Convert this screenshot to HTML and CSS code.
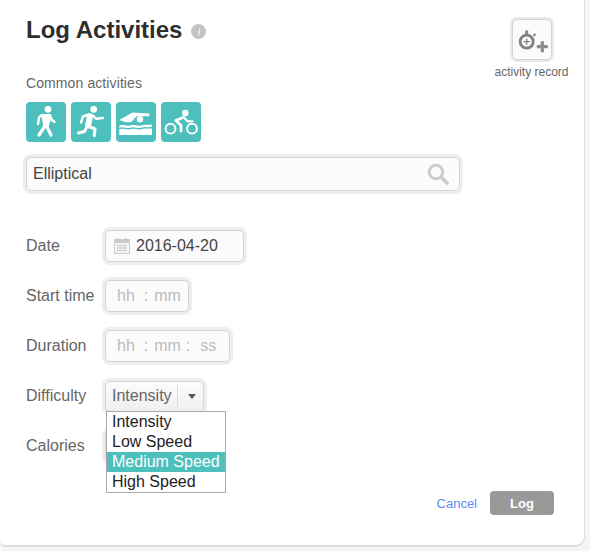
FILE: index.html
```html
<!DOCTYPE html>
<html lang="en">
<head>
    <meta charset="UTF-8">
    <meta name="viewport" content="width=device-width, initial-scale=1.0">
    <title>Log Activities</title>
    <link rel="stylesheet" href="styles.css">
</head>
<body>
    <div class="card">
        <div class="top">
            <div class="top-main">
                <div class="title-row">
                    <h1>Log Activities</h1>
                    <span class="info">i</span>
                </div>
                <div class="common-label">Common activities</div>
                <div class="activity-icons">
                    <button class="activity" aria-label="Walking">
                        <svg viewBox="0 0 40 40" width="40" height="40">
                            <circle cx="22" cy="7.3" r="3.4" fill="#fff"/>
                            <path d="M15.5 12 L24.5 12 L25 17 L22.5 25 L17.5 25 L16 17 Z" fill="#fff"/>
                            <path d="M19 24 L13 33 M20.5 24 L25 33" stroke="#fff" stroke-width="3.2" stroke-linecap="round" fill="none"/>
                            <path d="M16 13 L13 15.5 L12 22 M24 13 L25.5 17.5 L28.5 20" stroke="#fff" stroke-width="2.4" stroke-linecap="round" stroke-linejoin="round" fill="none"/>
                        </svg>
                    </button>
                    <button class="activity" aria-label="Running">
                        <svg viewBox="0 0 40 40" width="40" height="40">
                            <circle cx="22.7" cy="7.3" r="3.4" fill="#fff"/>
                            <path d="M19 14.5 L17 23.5" stroke="#fff" stroke-width="6" stroke-linecap="round" fill="none"/>
                            <path d="M15.5 25 L13.5 29.5 L7.5 31 M18 24.5 L24 27 L23.3 33.5" stroke="#fff" stroke-width="3" stroke-linecap="round" stroke-linejoin="round" fill="none"/>
                            <path d="M18 12.5 L12 14.5 L10 20.5 M22 13.5 L25 16.8 L32 16" stroke="#fff" stroke-width="2.4" stroke-linecap="round" stroke-linejoin="round" fill="none"/>
                        </svg>
                    </button>
                    <button class="activity" aria-label="Swimming">
                        <svg viewBox="0 0 40 40" width="40" height="40">
                            <circle cx="24" cy="17.3" r="3.2" fill="#fff"/>
                            <path d="M3.3 18 L16.5 10.6 L33.5 11.5 L33 14.2 L20.5 14.2 L16 19.5 C14 20.5 11 20.5 9 20 Z" fill="#fff"/>
                            <path d="M3.3 23.5 C7 22 10 24.5 14 23.5 C18 22 21 24.5 25 23.5 C29 22 32 23.5 36 22.5 L36 33 L3.3 33 Z" fill="#fff"/>
                            <path d="M3 26.5 C7 25 10 27.5 14 26.5 C18 25 21 27.5 25 26.5 C29 25 32 26.5 36.5 25.5" stroke="#4dc0bd" stroke-width="1.4" fill="none"/>
                        </svg>
                    </button>
                    <button class="activity" aria-label="Cycling">
                        <svg viewBox="0 0 40 40" width="40" height="40">
                            <circle cx="24.3" cy="11" r="3.2" fill="#fff"/>
                            <circle cx="9.5" cy="26.7" r="4.9" fill="none" stroke="#fff" stroke-width="2"/>
                            <circle cx="31" cy="26.7" r="4.9" fill="none" stroke="#fff" stroke-width="2"/>
                            <path d="M22 15.5 L14.8 18.5 L20 23.3 L20 29" stroke="#fff" stroke-width="2.8" stroke-linecap="round" stroke-linejoin="round" fill="none"/>
                            <path d="M23 15.5 L26.5 19.3 L31.5 19.3" stroke="#fff" stroke-width="2.2" stroke-linecap="round" stroke-linejoin="round" fill="none"/>
                        </svg>
                    </button>
                </div>
                <div class="field search">
                    <span>Elliptical</span>
                    <svg class="search-icon" viewBox="0 0 22 22" width="22" height="22">
                        <circle cx="9" cy="9" r="6.8" fill="none" stroke="#ccc" stroke-width="3"/>
                        <path d="M14 14 L20 20" stroke="#ccc" stroke-width="3.6" stroke-linecap="round"/>
                    </svg>
                </div>
            </div>
            <div class="record">
                <button class="record-btn" aria-label="activity record">
                    <svg viewBox="0 0 40 40" width="40" height="40">
                        <path d="M14.7 10.5 L14.7 14" stroke="#808080" stroke-width="3"/>
                        <path d="M21.5 16 L23.5 14" stroke="#808080" stroke-width="2"/>
                        <circle cx="14.7" cy="21.7" r="6.5" fill="none" stroke="#808080" stroke-width="2.8"/>
                        <path d="M11.5 21.7 H18 M14.7 18.5 V25" stroke="#808080" stroke-width="1.2"/>
                        <path d="M24.8 26.7 H35.8 M30.3 21.2 V32.2" stroke="#8c8c8c" stroke-width="3.2"/>
                    </svg>
                </button>
                <div class="record-label">activity record</div>
            </div>
        </div>

        <div class="rows">
            <div class="row">
                <label>Date</label>
                <div class="field date">
                    <svg class="cal-icon" viewBox="0 0 16 16" width="16" height="16">
                        <rect x="0.5" y="1.5" width="15" height="14" fill="#f6f6f6" stroke="#ccc"/>
                        <rect x="1" y="2" width="14" height="3" fill="#ccc"/>
                        <path d="M4 0 V3 M12 0 V3" stroke="#bbb" stroke-width="1.2"/>
                        <path d="M3 7.5 H13 M3 10 H13 M3 12.5 H13" stroke="#bbb" stroke-width="1.4" stroke-dasharray="1.4 1"/>
                    </svg>
                    <span>2016-04-20</span>
                </div>
            </div>
            <div class="row">
                <label>Start time</label>
                <div class="field time">
                    <span class="part">hh</span><span class="sep">:</span><span class="part">mm</span>
                </div>
            </div>
            <div class="row">
                <label>Duration</label>
                <div class="field time">
                    <span class="part">hh</span><span class="sep">:</span><span class="part">mm</span><span class="sep sep-tight">:</span><span class="part last">ss</span>
                </div>
            </div>
            <div class="row">
                <label>Difficulty</label>
                <div class="select-wrap">
                    <div class="field select">
                        <span class="select-value">Intensity</span>
                        <span class="select-arrow"></span>
                    </div>
                    <ul class="dropdown">
                        <li>Intensity</li>
                        <li>Low Speed</li>
                        <li class="selected">Medium Speed</li>
                        <li>High Speed</li>
                    </ul>
                </div>
            </div>
            <div class="row">
                <label>Calories</label>
                <div class="field calories"></div>
            </div>
        </div>

        <div class="actions">
            <a class="cancel" href="#">Cancel</a>
            <button class="log-btn">Log</button>
        </div>
    </div>
</body>
</html>
```

FILE: styles.css
```css
* {
    box-sizing: border-box;
}

html, body {
    height: 100%;
}

body {
    margin: 0;
    background: #f5f5f5;
    font-family: "Liberation Sans", Arial, sans-serif;
    font-size: 16px;
    color: #666;
    overflow: hidden;
}

.card {
    width: 585px;
    height: 547px;
    padding: 15px 15px 0 26px;
    background: #fff;
    border-right: 1px solid #ddd;
    border-bottom: 2px solid #ddd;
    border-radius: 0 0 10px 6px;
}

.top {
    display: flex;
    justify-content: space-between;
    align-items: flex-start;
}

.top-main {
    width: 434px;
}

.title-row {
    display: flex;
    align-items: center;
    gap: 9px;
    height: 30px;
}

h1 {
    margin: 0;
    font-size: 24px;
    line-height: 30px;
    font-weight: bold;
    color: #2e2e2e;
}

.info {
    width: 15px;
    height: 15px;
    border-radius: 50%;
    background: #c4c4c4;
    color: #fff;
    font-family: "Liberation Serif", serif;
    font-style: italic;
    font-size: 11px;
    line-height: 15px;
    text-align: center;
    margin-top: 2px;
}

.common-label {
    margin-top: 28px;
    font-size: 14px;
    line-height: 20px;
    letter-spacing: 0.1px;
}

.activity-icons {
    display: flex;
    gap: 5px;
    margin-top: 9px;
}

.activity {
    width: 40px;
    height: 40px;
    padding: 0;
    border: none;
    border-radius: 4px;
    background: #4dc0bd;
}

.activity svg {
    display: block;
}

.field {
    display: flex;
    align-items: center;
    height: 32px;
    border: 1px solid #d4d4d4;
    border-radius: 5px;
    background: #fbfbfb;
    box-shadow: 0 0 0 3px #eee;
}

.search {
    justify-content: space-between;
    height: 34px;
    margin-top: 15px;
    padding: 0 10px 0 6px;
    color: #444;
}

.search-icon {
    display: block;
}

.record {
    display: flex;
    flex-direction: column;
    align-items: center;
    width: 75px;
    padding-top: 4px;
}

.record-btn {
    width: 40px;
    height: 41px;
    padding: 0;
    border: 1px solid #d4d4d4;
    border-radius: 5px;
    background: #fbfbfb;
    box-shadow: 0 0 0 2px #e8e8e8;
}

.record-btn svg {
    display: block;
    margin: -1px;
}

.record-label {
    margin-top: 5px;
    font-size: 12px;
    line-height: 14px;
    color: #666;
    white-space: nowrap;
}

.rows {
    display: flex;
    flex-direction: column;
    gap: 18px;
    margin-top: 39px;
}

.row {
    display: flex;
    align-items: center;
    height: 32px;
}

.row label {
    width: 79px;
}

.date {
    width: 139px;
    padding-left: 8px;
    gap: 6px;
    color: #444;
}

.cal-icon {
    display: block;
}

.time {
    display: inline-flex;
    padding: 0 7px 0 11px;
    color: #bbb;
}

.sep {
    margin: 0 6px 0 9px;
}

.sep-tight {
    margin: 0 6px 0 5px;
}

.part.last {
    margin: 0 6px 0 4px;
}

.select-wrap {
    position: relative;
}

.select {
    width: 99px;
    height: 31px;
    padding-left: 6px;
    background: linear-gradient(#fcfcfc, #efefef);
}

.select-value {
    padding-right: 5px;
    border-right: 1px solid #ddd;
    line-height: 22px;
}

.select-arrow {
    width: 0;
    height: 0;
    margin-left: 10px;
    border-left: 4.5px solid transparent;
    border-right: 4.5px solid transparent;
    border-top: 5px solid #555;
}

.dropdown {
    position: absolute;
    top: 30px;
    left: 1px;
    z-index: 2;
    width: 120px;
    margin: 0;
    padding: 0;
    list-style: none;
    background: #fff;
    border: 1px solid #aaa;
    color: #222;
}

.dropdown li {
    height: 20px;
    padding-left: 5px;
    line-height: 20px;
    white-space: nowrap;
}

.dropdown .selected {
    background: #4dc0bd;
    color: #fff;
}

.calories {
    width: 110px;
}

.actions {
    display: flex;
    justify-content: flex-end;
    align-items: center;
    gap: 13px;
    margin-top: 29px;
    margin-right: 15px;
}

.cancel {
    font-size: 13px;
    color: #5b8def;
    text-decoration: none;
}

.log-btn {
    width: 64px;
    height: 24px;
    padding: 0;
    border: none;
    border-radius: 4px;
    background: #999;
    color: #fff;
    font-family: inherit;
    font-size: 13px;
    font-weight: bold;
}
```
